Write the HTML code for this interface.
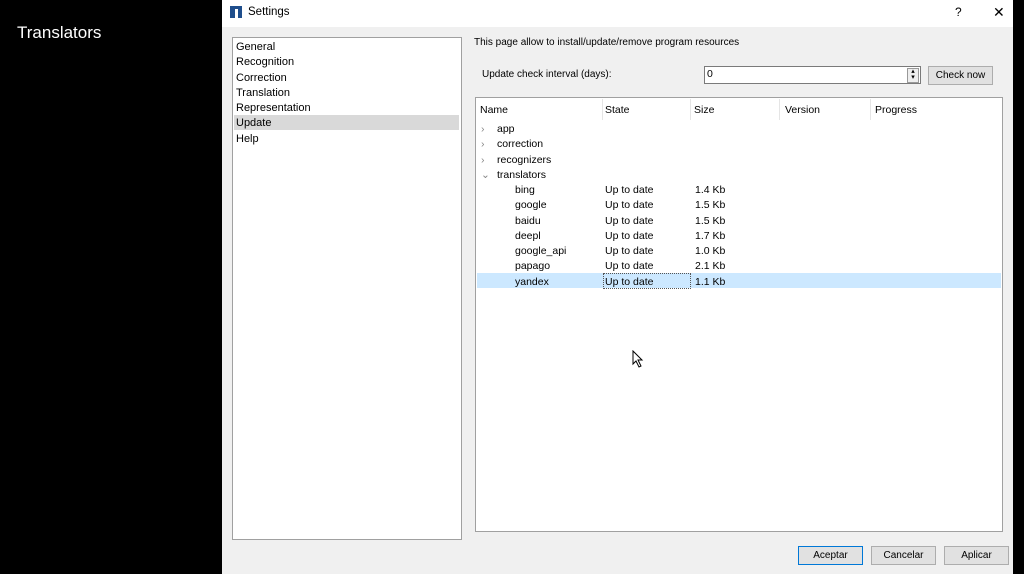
<!DOCTYPE html>
<html><head><style>
body{margin:0;width:1024px;height:574px;background:#000;position:relative;overflow:hidden;font-family:"Liberation Sans",sans-serif;font-size:10.5px;color:#000}
.a{position:absolute}
.t{white-space:nowrap}
</style></head><body>
<div class="a t" style="left:17px;top:23px;color:#fff;font-size:17px">Translators</div>
<div class="a" style="left:222px;top:0;width:791px;height:574px;background:#f0f0f0"></div>
<div class="a" style="left:222px;top:0;width:791px;height:27px;background:#fff"></div>
<div class="a" style="left:230px;top:6px;width:12px;height:12px;background:#1f4e8c"></div>
<div class="a" style="left:235px;top:9px;width:3px;height:10px;background:#fff"></div>
<div class="a t" style="left:248px;top:6px;font-size:11.5px">Settings</div>
<div class="a t" style="left:955px;top:5px;font-size:12px">?</div>
<div class="a t" style="left:993px;top:4px;font-size:14px">✕</div>
<div class="a" style="left:232px;top:37px;width:228px;height:501px;background:#fff;border:1px solid #a0a0a0"></div>
<div class="a" style="left:234px;top:115px;width:225px;height:15px;background:#d9d9d9"></div>
<div class="a t" style="left:236px;top:40px;line-height:15.3px;font-size:11px">General<br>Recognition<br>Correction<br>Translation<br>Representation<br>Update<br>Help</div>
<div class="a t" style="left:474px;top:37px;font-size:10px">This page allow to install/update/remove program resources</div>
<div class="a t" style="left:482px;top:69px;font-size:10px">Update check interval (days):</div>
<div class="a" style="left:704px;top:66px;width:215px;height:16px;background:#fff;border:1px solid #7a7a7a"></div>
<div class="a t" style="left:707px;top:68px">0</div>
<div class="a" style="left:907px;top:68px;width:10px;height:13px;border:1px solid #999;background:#eee;font-size:7px;line-height:6px;text-align:center">▴<br>▾</div>
<div class="a" style="left:928px;top:66px;width:63px;height:17px;background:#e1e1e1;border:1px solid #adadad;text-align:center;line-height:17px;font-size:10px">Check now</div>
<div class="a" style="left:475px;top:97px;width:526px;height:433px;background:#fff;border:1px solid #a0a0a0"></div>
<div class="a" style="left:602px;top:99px;width:1px;height:21px;background:#e5e5e5"></div>
<div class="a" style="left:690px;top:99px;width:1px;height:21px;background:#e5e5e5"></div>
<div class="a" style="left:779px;top:99px;width:1px;height:21px;background:#e5e5e5"></div>
<div class="a" style="left:870px;top:99px;width:1px;height:21px;background:#e5e5e5"></div>
<div class="a t" style="left:480px;top:104px">Name</div>
<div class="a t" style="left:605px;top:104px">State</div>
<div class="a t" style="left:694px;top:104px">Size</div>
<div class="a t" style="left:785px;top:104px">Version</div>
<div class="a t" style="left:875px;top:104px">Progress</div>
<div class="a" style="left:477px;top:273px;width:524px;height:15px;background:#cce8ff"></div>
<div class="a" style="left:603px;top:273px;width:86px;height:14px;border:1px dotted #555"></div>
<div class="a t" style="left:481px;top:122px;line-height:15.3px;color:#888">›<br>›<br>›<br>⌄</div>
<div class="a t" style="left:497px;top:122px;line-height:15.3px">app<br>correction<br>recognizers<br>translators</div>
<div class="a t" style="left:515px;top:183px;line-height:15.3px">bing<br>google<br>baidu<br>deepl<br>google_api<br>papago<br>yandex</div>
<div class="a t" style="left:605px;top:183px;line-height:15.3px">Up to date<br>Up to date<br>Up to date<br>Up to date<br>Up to date<br>Up to date<br>Up to date</div>
<div class="a t" style="left:695px;top:183px;line-height:15.3px">1.4 Kb<br>1.5 Kb<br>1.5 Kb<br>1.7 Kb<br>1.0 Kb<br>2.1 Kb<br>1.1 Kb</div>
<div class="a" style="left:798px;top:546px;width:63px;height:17px;background:#e1e1e1;border:1px solid #0078d7;text-align:center;line-height:17px;font-size:10px">Aceptar</div>
<div class="a" style="left:871px;top:546px;width:63px;height:17px;background:#e1e1e1;border:1px solid #adadad;text-align:center;line-height:17px;font-size:10px">Cancelar</div>
<div class="a" style="left:944px;top:546px;width:63px;height:17px;background:#e1e1e1;border:1px solid #adadad;text-align:center;line-height:17px;font-size:10px">Aplicar</div>
<svg class="a" style="left:632px;top:350px" width="12" height="18"><path d="M1 1 L1 14 L4 11 L7 17 L9 16 L6 10 L10 10 Z" fill="#fff" stroke="#000"/></svg>
</body></html>
